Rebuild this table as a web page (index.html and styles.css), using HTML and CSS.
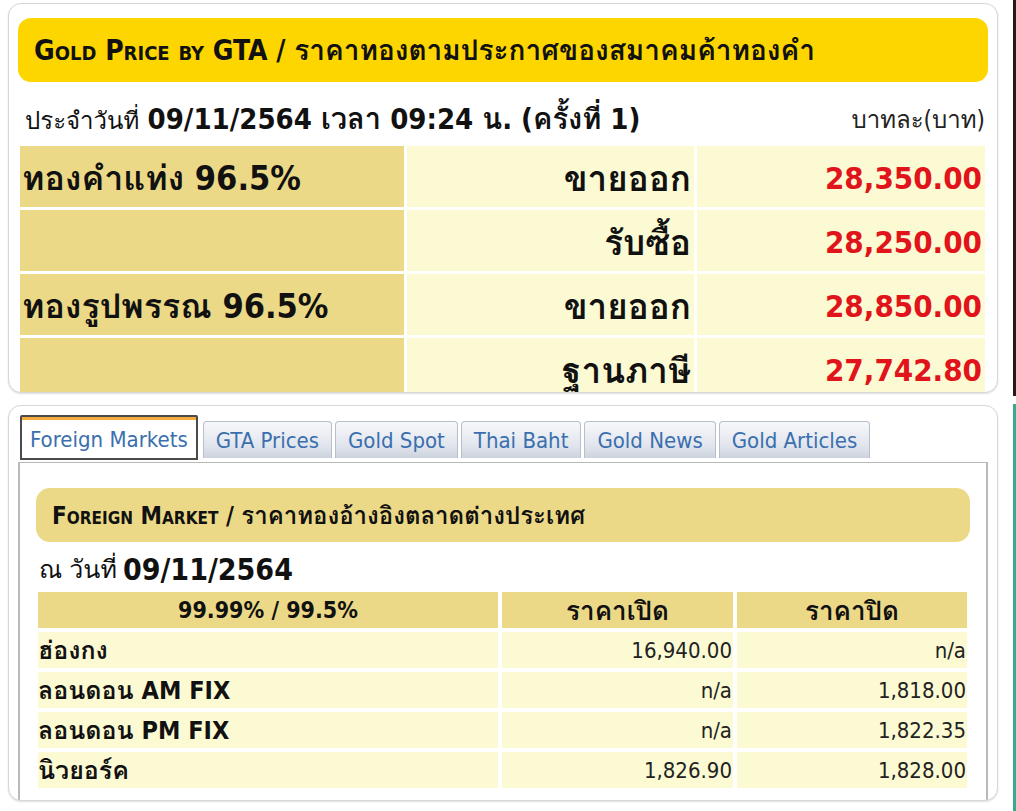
FILE: index.html
```html
<!DOCTYPE html>
<html lang="th">
<head>
<meta charset="utf-8">
<title>Gold Price by GTA</title>
<link rel="stylesheet" href="styles.css">
</head>
<body>
<div class="page">
  <div class="main">
    <section class="card card-top">
      <div class="gold-bar"><h1 class="sc">Gold Price by GTA / ราคาทองตามประกาศของสมาคมค้าทองคำ</h1></div>
      <div class="date-line">
        <div><span class="lbl">ประจำวันที่</span> <b>09/11/2564 เวลา 09:24 น. (ครั้งที่ 1)</b></div>
        <div class="unit">บาทละ(บาท)</div>
      </div>
      <div class="price-grid">
        <div class="c1">ทองคำแท่ง 96.5%</div><div class="c2">ขายออก</div><div class="c3">28,350.00</div>
        <div class="c1"></div><div class="c2">รับซื้อ</div><div class="c3">28,250.00</div>
        <div class="c1">ทองรูปพรรณ 96.5%</div><div class="c2">ขายออก</div><div class="c3">28,850.00</div>
        <div class="c1"></div><div class="c2">ฐานภาษี</div><div class="c3">27,742.80</div>
      </div>
    </section>

    <section class="card card-bottom">
      <div class="tabs">
        <div class="tab active">Foreign Markets</div>
        <div class="tab">GTA Prices</div>
        <div class="tab">Gold Spot</div>
        <div class="tab">Thai Baht</div>
        <div class="tab">Gold News</div>
        <div class="tab">Gold Articles</div>
      </div>
      <div class="panel">
        <div class="sub-bar"><h2 class="sc">Foreign Market / ราคาทองอ้างอิงตลาดต่างประเทศ</h2></div>
        <div class="date2"><span class="lbl">ณ วันที่</span> <b>09/11/2564</b></div>
        <div class="fm-grid">
          <div class="h">99.99% / 99.5%</div><div class="h th">ราคาเปิด</div><div class="h th">ราคาปิด</div>
          <div class="n">ฮ่องกง</div><div class="v">16,940.00</div><div class="v">n/a</div>
          <div class="n">ลอนดอน AM FIX</div><div class="v">n/a</div><div class="v">1,818.00</div>
          <div class="n">ลอนดอน PM FIX</div><div class="v">n/a</div><div class="v">1,822.35</div>
          <div class="n">นิวยอร์ค</div><div class="v">1,826.90</div><div class="v">1,828.00</div>
        </div>
      </div>
    </section>
  </div>
  <div class="side">
    <div class="side-top"></div>
    <div class="side-bottom"></div>
  </div>
</div>
</body>
</html>
```
FILE: styles.css
```css
html, body {
  margin: 0;
  padding: 0;
  background: #ffffff;
}
body {
  font-family: "DejaVu Sans", Loma, "Noto Sans Thai", sans-serif;
  font-stretch: condensed;
  color: #111;
}
.page {
  display: flex;
  width: 1016px;
  height: 811px;
  overflow: hidden;
}
.main {
  width: 990px;
  margin-left: 8px;
  display: flex;
  flex-direction: column;
}
.side {
  margin-left: auto;
  width: 5px;
  display: flex;
  flex-direction: column;
}
.side-top {
  height: 396px;
  border-right: 3px solid #2a1a1a;
}
.side-bottom {
  margin-top: 8px;
  flex: 1;
  border-right: 3px solid #3aaa8e;
}

.card {
  border: 1px solid #d6d6d6;
  border-radius: 13px;
  background: #fff;
  box-shadow: 0 1px 2px rgba(0,0,0,0.12);
  overflow: hidden;
}
.card-top {
  margin-top: 3px;
  height: 390px;
  padding: 14px 9px 0 9px;
  box-sizing: border-box;
}
.gold-bar {
  background: #fdd600;
  border-radius: 13px;
  height: 64px;
  display: flex;
  align-items: center;
  padding-left: 16px;
}
.sc {
  font-variant: small-caps;
  margin: 0;
  font-weight: bold;
}
.gold-bar h1 {
  font-size: 28px;
  white-space: nowrap;
}
.date-line {
  display: flex;
  justify-content: space-between;
  align-items: center;
  height: 64px;
  box-sizing: border-box;
  padding: 10px 3px 0 7px;
  font-size: 29px;
  white-space: nowrap;
}
.date-line .lbl {
  font-size: 24px;
}
.date-line .unit {
  font-size: 24px;
  color: #222;
}
.price-grid {
  display: grid;
  grid-template-columns: 384px 287px 288px;
  grid-auto-rows: 61px;
  gap: 3px 3px;
  margin: 0 2px;
}
.price-grid div {
  display: flex;
  align-items: center;
  font-weight: bold;
  white-space: nowrap;
  padding-top: 3px;
  box-sizing: border-box;
}
.price-grid .c1 {
  background: #ecd987;
  padding-left: 2px;
  font-size: 34px;
}
.price-grid .c2 {
  background: #fcfad3;
  justify-content: flex-end;
  padding-right: 3px;
  font-size: 35px;
}
.price-grid .c3 {
  background: #fcfad3;
  justify-content: flex-end;
  padding-right: 3px;
  color: #e0141a;
  font-size: 31px;
}

.card-bottom {
  margin-top: 12px;
  height: 396px;
  padding: 9px 9px 0 9px;
  box-sizing: border-box;
}
.tabs {
  display: flex;
  align-items: flex-end;
  gap: 3px;
  padding-left: 2px;
  height: 47px;
}
.tab {
  height: 37px;
  padding: 0 12px;
  display: flex;
  align-items: center;
  font-size: 22px;
  color: #3a6fae;
  background: linear-gradient(#f7f8fb, #e1e5ed 65%, #cdd3de);
  border: 1px solid #b8bfcc;
  border-bottom: none;
  border-radius: 4px 4px 0 0;
  margin-bottom: 4px;
  box-sizing: border-box;
  white-space: nowrap;
}
.tab.active {
  height: 45px;
  padding: 4px 8px 0 8px;
  background: #fff;
  border: 2px solid #4a4a4a;
  border-radius: 2px 2px 0 0;
  box-shadow: inset 0 3px 0 #f4aa3c;
  margin-bottom: 2px;
  margin-right: 2px;
}
.panel {
  border: 1px solid #b9b9b9;
  border-right-width: 2px;
  border-left-width: 2px;
  height: 340px;
  box-sizing: border-box;
  padding: 25px 16px 0 16px;
}
.sub-bar {
  background: #ecd987;
  border-radius: 14px;
  height: 54px;
  display: flex;
  align-items: center;
  padding-left: 16px;
}
.sub-bar h2 {
  font-size: 24px;
  white-space: nowrap;
}
.date2 {
  height: 50px;
  display: flex;
  align-items: center;
  gap: 6px;
  padding: 4px 0 0 3px;
  box-sizing: border-box;
  font-size: 30px;
}
.date2 .lbl {
  font-size: 25px;
}
.fm-grid {
  display: grid;
  grid-template-columns: 460px 231px 230px;
  grid-template-rows: 36px;
  grid-auto-rows: 36px;
  gap: 4px 4px;
  margin-left: 2px;
}
.fm-grid div {
  display: flex;
  align-items: center;
  font-size: 22px;
  white-space: nowrap;
}
.fm-grid .h {
  background: #ecd987;
  font-weight: bold;
  justify-content: center;
  font-size: 23px;
}
.fm-grid .h.th {
  font-size: 26px;
}
.fm-grid .n {
  background: #fcfad3;
  font-weight: bold;
  font-size: 25px;
}
.fm-grid .v {
  background: #fcfad3;
  justify-content: flex-end;
  color: #222;
  padding-right: 1px;
}
```
